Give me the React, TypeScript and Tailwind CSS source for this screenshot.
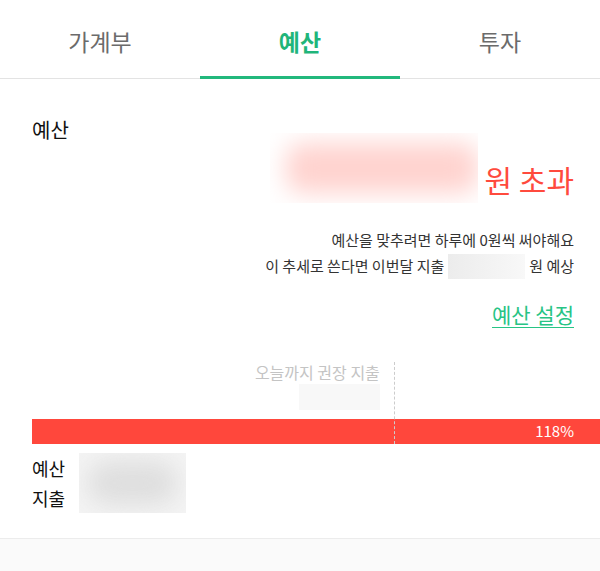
import React from 'react';

const tabs = ['가계부', '예산', '투자'];

const App: React.FC = () => {
  const active = 1;
  const markerPct = 63.7;

  return (
    <div
      className="w-[600px] h-[571px] bg-white overflow-hidden flex flex-col"
      style={{ fontFamily: '"Noto Sans CJK KR", "Noto Sans", sans-serif' }}
    >
      {/* Tabs */}
      <div className="flex h-[79px] border-b border-[#e3e3e3] shrink-0">
        {tabs.map((t, i) => (
          <div key={t} className="relative flex-1 flex items-center justify-center pt-[4px]">
            <span
              className={
                i === active
                  ? 'text-[23px] font-bold text-[#1fb57a]'
                  : 'text-[23px] text-[#6b6b6b]'
              }
            >
              {t}
            </span>
            {i === active && (
              <div className="absolute left-0 right-0 bottom-[-1px] h-[3px] bg-[#22b87c]" />
            )}
          </div>
        ))}
      </div>

      {/* Body */}
      <div className="flex-1 flex flex-col">
        <div className="pl-8 pr-[26px]">
          <div className="mt-[38px] text-[20px] leading-[26px] text-[#111]">예산</div>

          <div className="flex justify-end items-end h-[70px] -mt-[10px]">
            <div className="relative w-[208px] h-[70px] overflow-hidden">
              <div className="absolute left-[16px] right-0 top-[10px] bottom-[10px] rounded-2xl bg-[#ffd3cf] blur-md" />
            </div>
            <span className="ml-[6px] pb-[6px] text-[30px] leading-[36px] text-[#ff4a3d]">원 초과</span>
          </div>

          <div className="mt-[24px] flex flex-col items-end text-[15px] leading-[26px] text-[#333]">
            <div>예산을 맞추려면 하루에 0원씩 써야해요</div>
            <div className="flex items-center">
              <span>이 추세로 쓴다면 이번달 지출</span>
              <span className="mx-[4px] w-[77px] h-[25px] bg-gradient-to-r from-[#ececec] to-[#f8f8f8]" />
              <span>원 예상</span>
            </div>
          </div>

          <div className="mt-[22px] flex justify-end">
            <span className="text-[21px] leading-[26px] text-[#27c485] underline underline-offset-4 decoration-1">
              예산 설정
            </span>
          </div>
        </div>

        {/* Chart */}
        <div className="relative ml-8 mt-[33px]">
          <div className="h-[59px]" />
          <div className="h-[25px] bg-[#ff473c] flex items-center justify-end pr-[26px]">
            <span className="text-[15px] text-white">118%</span>
          </div>
          <div
            className="absolute top-[2px] bottom-0 border-l border-dashed border-[#cccccc]"
            style={{ left: `${markerPct}%` }}
          />
          <div
            className="absolute top-[2px] flex flex-col items-end pr-[14px]"
            style={{ right: `${100 - markerPct}%` }}
          >
            <span className="text-[16px] leading-[20px] text-[#c4c4c4] whitespace-nowrap">오늘까지 권장 지출</span>
            <span className="mt-[2px] w-[81px] h-[26px] bg-[#f8f8f8]" />
          </div>
        </div>

        {/* Legend */}
        <div className="ml-8 mt-[9px] flex items-center">
          <div className="flex flex-col text-[18px] leading-[30px] text-[#111]">
            <span>예산</span>
            <span>지출</span>
          </div>
          <div className="relative ml-[14px] w-[107px] h-[60px] overflow-hidden bg-[#f4f4f4]">
            <div className="absolute inset-[8px] rounded-full bg-[#dedede] blur-md" />
          </div>
        </div>

        <div className="mt-auto h-[33px] border-t border-[#ececec] bg-[#fafafa]" />
      </div>
    </div>
  );
};

export default App;
